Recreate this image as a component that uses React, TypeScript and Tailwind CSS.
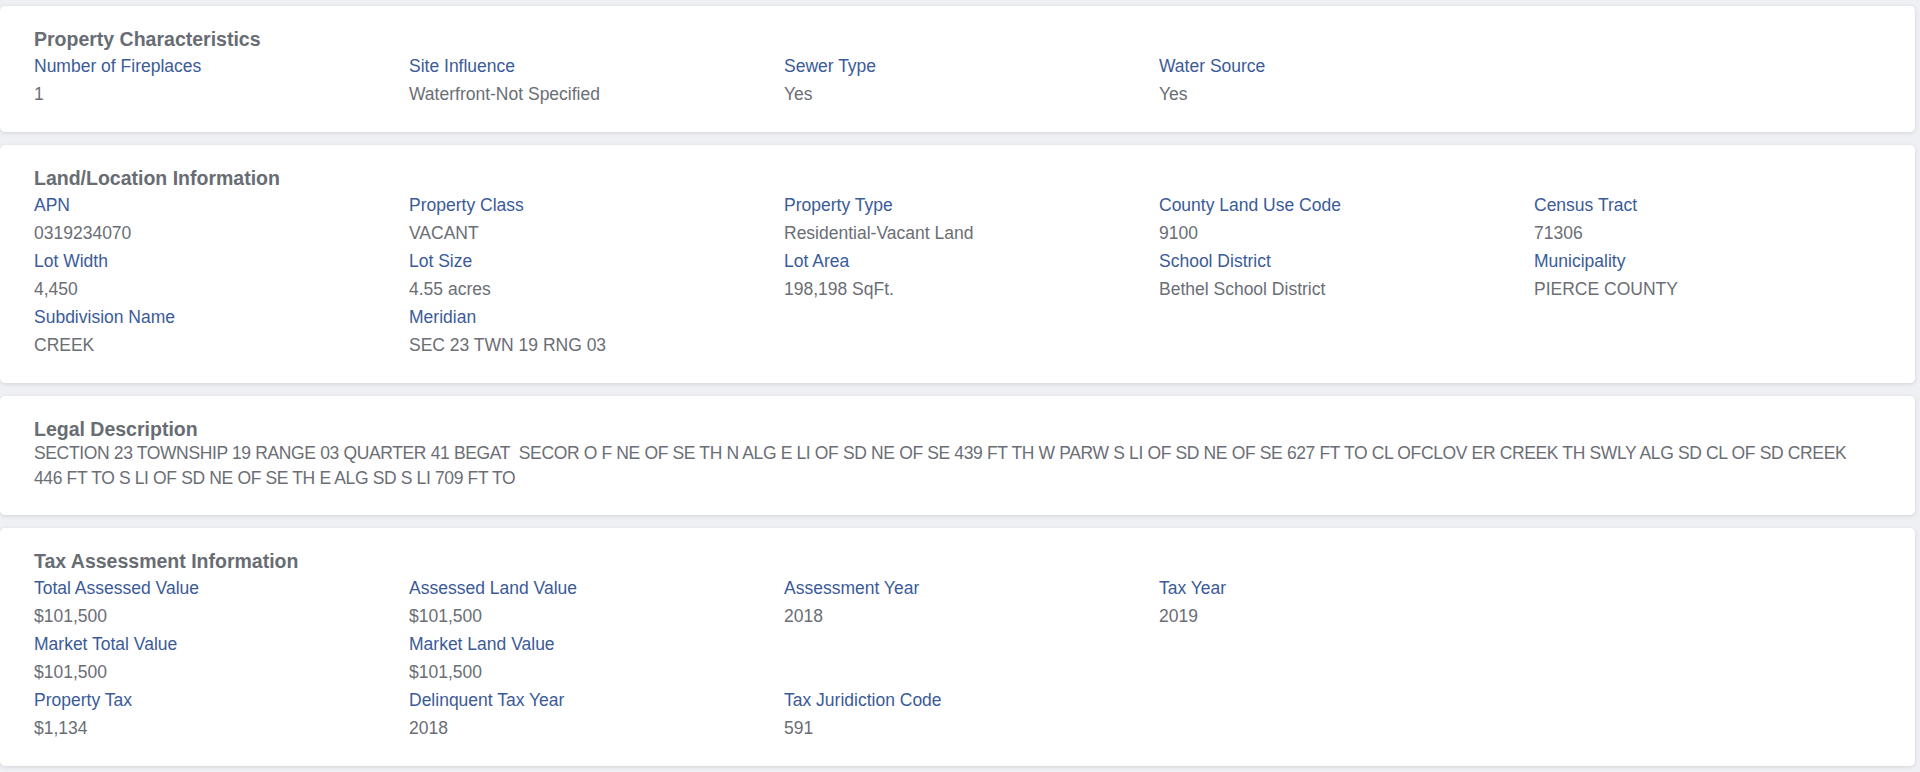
type Field = { label: string; value: string };

const characteristics: Field[][] = [
  [
    { label: 'Number of Fireplaces', value: '1' },
    { label: 'Site Influence', value: 'Waterfront-Not Specified' },
    { label: 'Sewer Type', value: 'Yes' },
    { label: 'Water Source', value: 'Yes' },
  ],
];

const landLocation: Field[][] = [
  [
    { label: 'APN', value: '0319234070' },
    { label: 'Property Class', value: 'VACANT' },
    { label: 'Property Type', value: 'Residential-Vacant Land' },
    { label: 'County Land Use Code', value: '9100' },
    { label: 'Census Tract', value: '71306' },
  ],
  [
    { label: 'Lot Width', value: '4,450' },
    { label: 'Lot Size', value: '4.55 acres' },
    { label: 'Lot Area', value: '198,198 SqFt.' },
    { label: 'School District', value: 'Bethel School District' },
    { label: 'Municipality', value: 'PIERCE COUNTY' },
  ],
  [
    { label: 'Subdivision Name', value: 'CREEK' },
    { label: 'Meridian', value: 'SEC 23 TWN 19 RNG 03' },
  ],
];

const taxAssessment: Field[][] = [
  [
    { label: 'Total Assessed Value', value: '$101,500' },
    { label: 'Assessed Land Value', value: '$101,500' },
    { label: 'Assessment Year', value: '2018' },
    { label: 'Tax Year', value: '2019' },
  ],
  [
    { label: 'Market Total Value', value: '$101,500' },
    { label: 'Market Land Value', value: '$101,500' },
  ],
  [
    { label: 'Property Tax', value: '$1,134' },
    { label: 'Delinquent Tax Year', value: '2018' },
    { label: 'Tax Juridiction Code', value: '591' },
  ],
];

function Card({ title, children }: { title: string; children: React.ReactNode }) {
  return (
    <section className="bg-white rounded-[5px] shadow-[0_1px_4px_rgba(0,0,0,0.12)] pl-[34px] pr-[20px] pt-[21px] pb-[27px]">
      <h2 className="text-[19.5px] leading-[24px] font-bold text-[#686c73]">{title}</h2>
      {children}
    </section>
  );
}

function FieldGrid({ rows }: { rows: Field[][] }) {
  return (
    <div className="mt-[4px] flex flex-col gap-[6px]">
      {rows.map((row, i) => (
        <div key={i} className="grid grid-cols-[repeat(5,375px)]">
          {row.map((f) => (
            <div key={f.label}>
              <div className="text-[17.5px] leading-[22px] text-[#3b5b98]">{f.label}</div>
              <div className="mt-[6px] text-[17.5px] leading-[22px] text-[#6b6e75]">{f.value}</div>
            </div>
          ))}
        </div>
      ))}
    </div>
  );
}

export default function App() {
  return (
    <div className="min-h-screen bg-[#eef0f3] pt-[6px] pr-[5px] pb-[6px] flex flex-col gap-[13px] font-['Liberation_Sans',Arial,sans-serif]">
      <Card title="Property Characteristics">
        <FieldGrid rows={characteristics} />
      </Card>

      <Card title="Land/Location Information">
        <FieldGrid rows={landLocation} />
      </Card>

      {/* Legal description wraps at the same place as the source */}
      <section className="bg-white rounded-[5px] shadow-[0_1px_4px_rgba(0,0,0,0.12)] pl-[34px] pr-[20px] pt-[21px] pb-[24px]">
        <h2 className="text-[19.5px] leading-[24px] font-bold text-[#686c73]">Legal Description</h2>
        <p className="text-[17.5px] leading-[25px] tracking-[-0.36px] text-[#6b6e75] whitespace-pre">
          {'SECTION 23 TOWNSHIP 19 RANGE 03 QUARTER 41 BEGAT  SECOR O F NE OF SE TH N ALG E LI OF SD NE OF SE 439 FT TH W PARW S LI OF SD NE OF SE 627 FT TO CL OFCLOV ER CREEK TH SWLY ALG SD CL OF SD CREEK'}
          <br />
          {'446 FT TO S LI OF SD NE OF SE TH E ALG SD S LI 709 FT TO'}
        </p>
      </section>

      <Card title="Tax Assessment Information">
        <FieldGrid rows={taxAssessment} />
      </Card>
    </div>
  );
}
